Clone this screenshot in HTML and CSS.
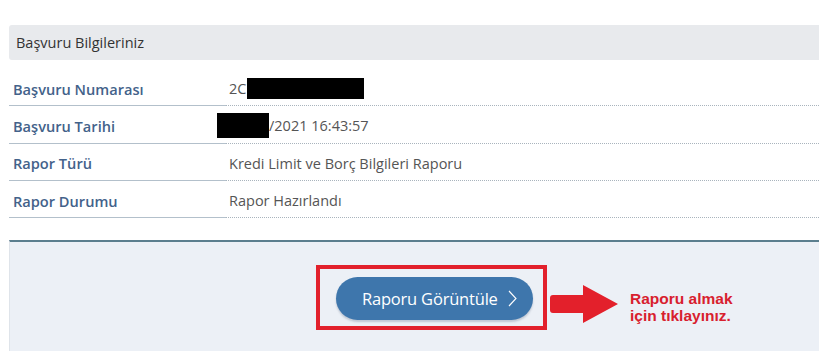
FILE: index.html
```html
<!DOCTYPE html>
<html lang="tr">
<head>
<meta charset="utf-8">
<link rel="stylesheet" href="styles.css">
</head>
<body>
<div class="page">
  <div class="section-title">Başvuru Bilgileriniz</div>
  <div class="info">
    <div class="row">
      <div class="label">Başvuru Numarası</div>
      <div class="value">2C<span class="redact redact-1"></span></div>
    </div>
    <div class="row">
      <div class="label">Başvuru Tarihi</div>
      <div class="value"><span class="redact redact-2"></span>/2021 16:43:57</div>
    </div>
    <div class="row">
      <div class="label">Rapor Türü</div>
      <div class="value">Kredi Limit ve Borç Bilgileri Raporu</div>
    </div>
    <div class="row">
      <div class="label">Rapor Durumu</div>
      <div class="value">Rapor Hazırlandı</div>
    </div>
  </div>
  <div class="actions">
    <div class="highlight">
      <button class="btn-report">Raporu Görüntüle
        <svg class="chev" width="9" height="17" viewBox="0 0 9 17"><polyline points="1,1 8,8.5 1,16" fill="none" stroke="#fff" stroke-width="1.1"/></svg>
      </button>
    </div>
    <svg class="arrow" width="69" height="39" viewBox="0 0 69 39"><path d="M3 10 H33 V0 L68 19 L33 38 V28 H3 Q0 28 0 25 V13 Q0 10 3 10 Z" fill="#e3202b"/></svg>
    <div class="hint">Raporu almak<br>için tıklayınız.</div>
  </div>
</div>
</body>
</html>
```

FILE: styles.css
```css
* { box-sizing: border-box; }
html, body { margin: 0; padding: 0; background: #fff; }
body {
  font-family: "Open Sans", "Noto Sans", sans-serif;
  width: 819px;
  height: 351px;
  overflow: hidden;
}
.page {
  padding: 25px 0 0 9px;
}
.section-title {
  height: 35px;
  line-height: 36px;
  background: #e8eaed;
  border-radius: 3px 0 0 3px;
  padding-left: 7px;
  font-size: 14.5px;
  color: #333;
}
.info {
  margin-top: 9px;
}
.row {
  display: flex;
  height: 37.3px;
}
.label {
  width: 217px;
  flex: none;
  padding: 3px 0 0 4px;
  border-bottom: 1px solid #b3c0cb;
  font-size: 14.6px;
  font-weight: 600;
  color: #43628a;
  display: flex;
  align-items: center;
}
.value {
  flex: 1;
  padding: 3px 0 0 3px;
  border-bottom: 1px dotted #a9b4bd;
  font-size: 14.5px;
  color: #555;
  display: flex;
  align-items: center;
}
.redact {
  display: inline-block;
  background: #000;
}
.redact-1 {
  width: 117px;
  height: 21px;
  margin: 0 0 0 1px;
}
.redact-2 {
  width: 52px;
  height: 25px;
  margin-left: -12px;
}
.actions {
  margin-top: 22px;
  height: 120px;
  background: #ecf0f6;
  border-top: 2px solid #5b7e8e;
  border-left: 1px solid #dfe4ea;
  padding: 23px 0 0 306px;
  display: flex;
  align-items: flex-start;
}
.highlight {
  border: 4px solid #e2202c;
  padding: 8px 10px 6px 16px;
}
.btn-report {
  display: flex;
  align-items: center;
  height: 43px;
  width: 197px;
  padding: 0 0 0 26px;
  border: none;
  border-radius: 22px;
  background: #3e76ac;
  box-shadow: 0 2px 2px rgba(60, 80, 110, 0.25);
  color: #fff;
  font-family: "Open Sans", "Noto Sans", sans-serif;
  font-size: 16.5px;
  letter-spacing: -0.2px;
}
.chev {
  margin-left: 10px;
}
.arrow {
  margin: 20px 0 0 3px;
  flex: none;
}
.hint {
  margin: 25px 0 0 11px;
  font-family: "Liberation Sans", Arial, sans-serif;
  font-weight: bold;
  font-size: 15.5px;
  line-height: 17px;
  color: #d8202e;
}
```
